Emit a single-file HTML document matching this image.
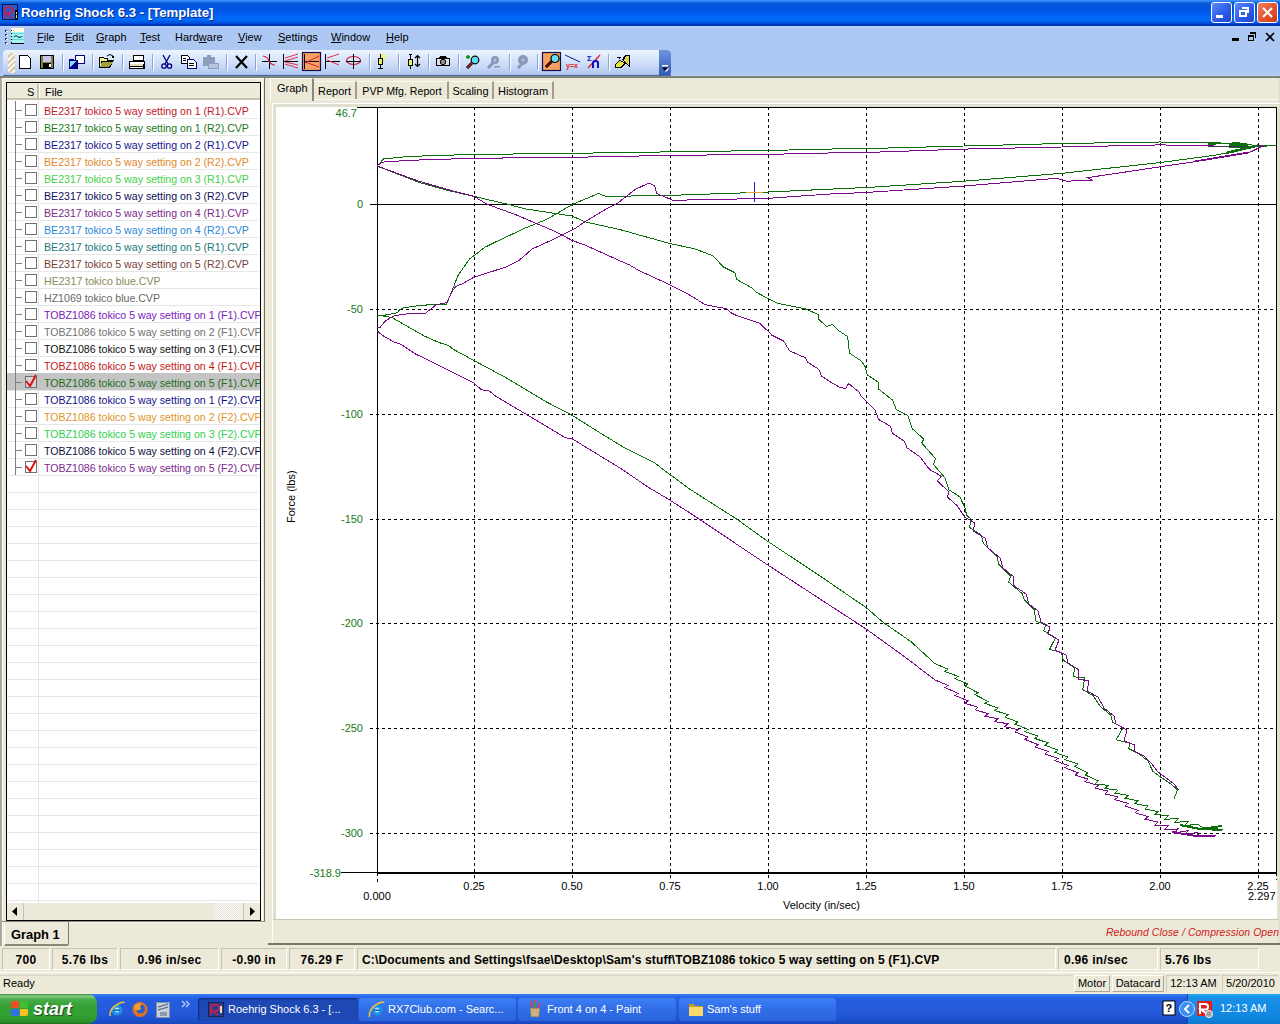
<!DOCTYPE html>
<html><head><meta charset="utf-8">
<style>
*{margin:0;padding:0;box-sizing:border-box}
html,body{width:1280px;height:1024px;overflow:hidden;background:#ece9d8;font-family:"Liberation Sans",sans-serif;font-size:11px;color:#000}
.a{position:absolute}
.t{position:absolute;white-space:nowrap;line-height:1}
.rt{position:absolute;left:44px;white-space:nowrap;line-height:17px;padding-top:2px;height:17px;font-size:10.6px;width:216px;overflow:hidden}
.menu span{position:absolute;top:31px;line-height:12px;font-size:11px;white-space:nowrap}
.sunk{position:absolute;border-top:1px solid #aca899;border-left:1px solid #aca899;border-bottom:1px solid #fff;border-right:1px solid #fff}
.sb{position:absolute;top:948px;height:22px;padding-top:1px;border-top:1px solid #c5c2b2;border-left:1px solid #c5c2b2;border-bottom:1px solid #fff;border-right:1px solid #fff;font-weight:bold;font-size:12px;line-height:20px;text-align:center;white-space:nowrap;overflow:hidden;letter-spacing:0.3px}
.tab{position:absolute;top:81px;height:18px;border-right:2px solid #a09f90;border-top:1px solid #fbf9f0;font-size:11px;line-height:18px;text-align:center;white-space:nowrap}
.lbl{position:absolute;color:#187818;font-size:11px;line-height:11px;text-align:right;white-space:nowrap}
.xl{position:absolute;font-size:11px;line-height:11px;white-space:nowrap;text-align:center}
.tbtn{position:absolute;top:998px;height:23px;border-radius:3px;color:#fff;font-size:11px;line-height:22px;white-space:nowrap;overflow:hidden}
.sep{position:absolute;top:55px;width:1px;height:16px;background:#8aa4d0;box-shadow:1px 0 0 #fff}
</style></head>
<body>
<!-- title bar -->
<div class="a" style="left:0;top:0;width:1280px;height:26px;background:linear-gradient(#3d95ff 0px,#2a7af0 1.5px,#0a5ad8 3px,#0054e0 7px,#0058ea 12px,#0068f8 17px,#006af8 20px,#0050dc 23px,#0032b0 25px,#0032a8 26px)"></div>
<svg class="a" style="left:2px;top:4px" width="16" height="16"><rect x="0" y="0" width="16" height="16" fill="#0a1450"/><rect x="1" y="1" width="14" height="14" fill="#3258c0"/><path d="M3.5 14V3.5H8Q11 3.5 11 6.5Q11 9 8 9H4.5L10 13.5" fill="none" stroke="#c02050" stroke-width="1.6"/><rect x="13" y="6" width="3" height="10" fill="#000"/><rect x="14" y="8" width="1" height="2" fill="#e8e0a0"/><rect x="14" y="11" width="1" height="3" fill="#e8e0a0"/></svg>
<div class="t" style="left:21px;top:6px;color:#fff;font-weight:bold;font-size:13.2px;text-shadow:1px 1px 0 #0a2a90">Roehrig Shock 6.3 - [Template]</div>
<div class="a" style="left:1211px;top:2px;width:21px;height:21px;border:1px solid #fff;border-radius:3px;background:linear-gradient(135deg,#5a8af8,#2a5ae8 60%,#1a46c8)"></div>
<div class="a" style="left:1216px;top:15px;width:7px;height:3px;background:#fff"></div>
<div class="a" style="left:1234px;top:2px;width:21px;height:21px;border:1px solid #fff;border-radius:3px;background:linear-gradient(135deg,#5a8af8,#2a5ae8 60%,#1a46c8)"></div>
<div class="a" style="left:1239px;top:10px;width:8px;height:7px;border:2px solid #fff;border-top-width:2px"></div>
<div class="a" style="left:1242px;top:7px;width:7px;height:6px;border-top:2px solid #fff;border-right:2px solid #fff"></div>
<div class="a" style="left:1257px;top:2px;width:21px;height:21px;border:1px solid #fff;border-radius:3px;background:linear-gradient(135deg,#f08060,#e0502a 60%,#c83a18)"></div>
<svg class="a" style="left:1261px;top:6px" width="13" height="13"><path d="M2 2L11 11M11 2L2 11" stroke="#fff" stroke-width="2"/></svg>

<!-- menu bar -->
<div class="a" style="left:0;top:26px;width:1280px;height:50px;background:linear-gradient(#bcd2fa 0,#aec8f4 3px,#adc7f3 45px,#b4ccf8 50px)"></div>
<svg class="a" style="left:0;top:26px" width="30" height="24" shape-rendering="crispEdges"><g fill="#203a68"><rect x="5" y="4" width="2" height="2"/><rect x="5" y="8" width="2" height="2"/><rect x="5" y="12" width="2" height="2"/><rect x="5" y="16" width="2" height="2"/></g><g fill="#fff"><rect x="6" y="5" width="2" height="1"/><rect x="6" y="9" width="2" height="1"/><rect x="6" y="13" width="2" height="1"/><rect x="6" y="17" width="2" height="1"/></g><rect x="11" y="2" width="13" height="4" fill="#fffce0"/><rect x="11" y="6" width="13" height="11" fill="#a8f4f0"/><g fill="#60d8d8"><rect x="11" y="7" width="13" height="1"/><rect x="11" y="10" width="13" height="1"/><rect x="11" y="13" width="13" height="1"/></g><path d="M14 11Q16 8 18 11Q20 13 22 10" fill="none" stroke="#204040" stroke-width="1" shape-rendering="auto"/><rect x="11" y="17" width="13" height="1" fill="#000"/><g fill="#000"><rect x="11" y="4" width="1" height="1"/><rect x="11" y="7" width="1" height="1"/><rect x="11" y="10" width="1" height="1"/><rect x="11" y="13" width="1" height="1"/><rect x="11" y="16" width="1" height="1"/></g></svg>
<div class="menu">
<span style="left:37px"><u>F</u>ile</span>
<span style="left:65px"><u>E</u>dit</span>
<span style="left:96px"><u>G</u>raph</span>
<span style="left:140px"><u>T</u>est</span>
<span style="left:175px">Hard<u>w</u>are</span>
<span style="left:238px"><u>V</u>iew</span>
<span style="left:278px"><u>S</u>ettings</span>
<span style="left:331px"><u>W</u>indow</span>
<span style="left:386px"><u>H</u>elp</span>
</div>
<div class="a" style="left:1232px;top:38px;width:7px;height:3px;background:#000"></div>
<div class="a" style="left:1248px;top:35px;width:6px;height:6px;border:1px solid #000;border-top-width:2px"></div>
<div class="a" style="left:1250px;top:32px;width:6px;height:6px;border-top:2px solid #000;border-right:1px solid #000"></div>
<svg class="a" style="left:1265px;top:32px" width="10" height="10"><path d="M1 1L9 9M9 1L1 9" stroke="#000" stroke-width="1.6"/></svg>

<!-- toolbar -->
<div class="a" style="left:3px;top:50px;width:668px;height:26px;border-radius:4px 4px 4px 4px;background:linear-gradient(#eef4fe 0px,#dfeafc 6px,#c9daf8 16px,#b0c7ef 24px,#8ea8d8 26px)"></div>
<div class="a" style="left:659px;top:50px;width:12px;height:26px;border-radius:0 4px 4px 0;background:linear-gradient(#6f94de,#2d58b8)"></div>
<svg class="a" style="left:660px;top:64px" width="11" height="10"><rect x="2" y="1" width="6" height="1.5" fill="#fff"/><path d="M2 3.5H8L5 7Z" fill="#000"/><path d="M5.5 7.5L8.5 4.5" stroke="#fff" stroke-width="1.2"/></svg>
<div class="a" style="left:8px;top:53px;width:7px;height:20px;background:repeating-linear-gradient(135deg,#f8f4e8 0 2px,#d8c8a8 2px 4px)"></div>
<svg class="a" style="left:0;top:0" width="680" height="78" shape-rendering="crispEdges">
<!-- separators -->
<g fill="#8ba6d2"><rect x="62" y="54" width="1" height="16"/><rect x="92" y="54" width="1" height="16"/><rect x="122" y="54" width="1" height="16"/><rect x="152" y="54" width="1" height="16"/><rect x="226" y="54" width="1" height="16"/><rect x="255" y="54" width="1" height="16"/><rect x="369" y="54" width="1" height="16"/><rect x="398" y="54" width="1" height="16"/><rect x="428" y="54" width="1" height="16"/><rect x="458" y="54" width="1" height="16"/><rect x="509" y="54" width="1" height="16"/><rect x="537" y="54" width="1" height="16"/><rect x="608" y="54" width="1" height="16"/></g>
<g fill="#fff"><rect x="63" y="55" width="1" height="16"/><rect x="93" y="55" width="1" height="16"/><rect x="123" y="55" width="1" height="16"/><rect x="153" y="55" width="1" height="16"/><rect x="227" y="55" width="1" height="16"/><rect x="256" y="55" width="1" height="16"/><rect x="370" y="55" width="1" height="16"/><rect x="399" y="55" width="1" height="16"/><rect x="429" y="55" width="1" height="16"/><rect x="459" y="55" width="1" height="16"/><rect x="510" y="55" width="1" height="16"/><rect x="538" y="55" width="1" height="16"/><rect x="609" y="55" width="1" height="16"/></g>
<!-- new -->
<path d="M19 55H27L30 58V68H19Z" fill="#fff" stroke="#000" stroke-width="1" transform="translate(0.5,0.5)"/>
<!-- save -->
<rect x="40" y="55" width="14" height="14" fill="#000"/>
<rect x="41" y="56" width="12" height="12" fill="#808040"/>
<rect x="43" y="56" width="8" height="6" fill="#c8c8e8"/>
<rect x="43" y="63" width="8" height="5" fill="#000"/>
<rect x="49" y="64" width="2" height="3" fill="#fff"/>
<!-- export -->
<rect x="75" y="55" width="10" height="9" fill="#000080"/>
<rect x="76" y="56" width="8" height="7" fill="#fff"/>
<path d="M69 59H73L74 60H78V69H69Z" fill="#000080"/>
<path d="M70 61H76L70 68Z" fill="#80e0f0"/>
<!-- open -->
<path d="M99 57H103L104 58H108V60H114L110 68H99Z" fill="#000"/>
<path d="M100 58H103L104 59H107V61H101V66H100Z" fill="#f8f090"/>
<path d="M102 62H113L109 67H100Z" fill="#a0a040"/>
<path d="M107 56Q110 53 113 56" fill="none" stroke="#000" stroke-width="1" shape-rendering="auto"/>
<rect x="112" y="56" width="2" height="2" fill="#000"/>
<!-- print -->
<path d="M133 55H143V60H133Z" fill="#fff" stroke="#000" transform="translate(0.5,0.5)"/>
<rect x="129" y="61" width="16" height="8" fill="#000"/>
<rect x="130" y="62" width="14" height="2" fill="#fff"/>
<rect x="130" y="64" width="13" height="2" fill="#e0e0b0"/>
<rect x="130" y="67" width="13" height="1" fill="#fff"/>
<!-- cut -->
<g fill="none" stroke="#000080" stroke-width="1.3" shape-rendering="auto"><path d="M163 55L168 64M170 55L165 64"/><circle cx="164" cy="66" r="2.2"/><circle cx="169.5" cy="66" r="2.2"/></g>
<!-- copy -->
<path d="M181 55H187L189 57V63H181Z" fill="#fff" stroke="#000" transform="translate(0.5,0.5)"/>
<path d="M187 59H193L196 62V68H187Z" fill="#fff" stroke="#000080" stroke-width="1.2" transform="translate(0.5,0.5)"/>
<g fill="#000"><rect x="183" y="58" width="3" height="1"/><rect x="183" y="60" width="3" height="1"/><rect x="189" y="63" width="5" height="1"/><rect x="189" y="65" width="5" height="1"/></g>
<!-- paste disabled -->
<path d="M203 57H207V55H211V57H215V63H219V69H208V66H203Z" fill="#8e9cbc"/>
<rect x="209" y="64" width="9" height="4" fill="#b8c4dc"/>
<!-- delete X -->
<path d="M236 56L247 68M247 56L236 68" stroke="#000" stroke-width="2.2" shape-rendering="auto"/>
<!-- graph icons -->
<g shape-rendering="auto">
<path d="M262 61.5H277M269.5 54V69" stroke="#000" stroke-width="1"/>
<path d="M263 56Q268 57 269 61Q271 65 275 65" stroke="#d02040" stroke-width="1.2" fill="none"/>
<path d="M283.5 54V69M284 61.5H298" stroke="#000" stroke-width="1"/>
<path d="M285 58L298 54M285 61L298 57M285 62L298 65M285 64L298 68" stroke="#e03050" stroke-width="1" fill="none"/>
<rect x="302.5" y="52.5" width="18" height="18" fill="#f8a060" stroke="#101050" stroke-width="1.2"/>
<path d="M304.5 54V69M305 61.5H319" stroke="#000" stroke-width="1"/>
<path d="M305 63L319 56M305 62L319 67" stroke="#d02040" stroke-width="1" fill="none"/>
<path d="M325.5 54V69M326 61.5H340" stroke="#000" stroke-width="1"/>
<path d="M327 58L339 54M327 60L339 65" stroke="#e03050" stroke-width="1" fill="none"/>
<ellipse cx="353.5" cy="60.5" rx="7" ry="4" fill="none" stroke="#d02040" stroke-width="1.2"/>
<path d="M353.5 54V69M346 61.5H361" stroke="#000" stroke-width="1"/>
</g>
<!-- shock -->
<circle cx="383" cy="57" r="3" fill="#f8f840" opacity="0.6"/>
<rect x="380" y="54" width="1" height="15" fill="#000"/>
<rect x="378" y="58" width="5" height="7" fill="#000"/><rect x="379" y="59" width="3" height="5" fill="#f0f060"/>
<rect x="378" y="68" width="5" height="1" fill="#000"/>
<!-- shock + arrow -->
<rect x="410" y="54" width="1" height="15" fill="#000"/><rect x="409" y="54" width="3" height="1" fill="#000"/>
<rect x="408" y="59" width="5" height="7" fill="#000"/><rect x="409" y="60" width="3" height="5" fill="#f0f060"/>
<path d="M417.5 56V66M415 58L417.5 55.5L420 58M415 64L417.5 66.5L420 64" stroke="#000" stroke-width="1.2" fill="none" shape-rendering="auto"/>
<!-- camera -->
<path d="M436 58H439L440 56H446L447 58H450V66H436Z" fill="#000"/>
<rect x="437" y="59" width="12" height="6" fill="#e0e0e0"/>
<circle cx="443" cy="62" r="2.7" fill="#909090" stroke="#000" shape-rendering="auto"/>
<!-- zoom+ -->
<g shape-rendering="auto">
<path d="M468 55V59M466 57H470" stroke="#10a010" stroke-width="1.8"/>
<path d="M467 68L472 63" stroke="#000" stroke-width="3"/><path d="M467 68L472 63" stroke="#a02020" stroke-width="1.6"/>
<circle cx="475" cy="60" r="3.8" fill="#60e0f0" stroke="#000" stroke-width="1.2"/>
<path d="M488 68L493 63" stroke="#8898b8" stroke-width="3"/>
<circle cx="495" cy="60" r="4" fill="#8898b8"/><circle cx="495" cy="60" r="1.5" fill="#b8c4dc"/>
<rect x="494" y="66" width="6" height="1.5" fill="#8898b8"/>
<path d="M518 68L522 64" stroke="#8898b8" stroke-width="3"/>
<circle cx="523" cy="60" r="5" fill="#8898b8"/><circle cx="523" cy="60" r="1.5" fill="#b8c4dc"/>
<rect x="542.5" y="52.5" width="18" height="18" fill="#f8a060" stroke="#101050" stroke-width="1.2"/>
<path d="M546 67L552 61" stroke="#000" stroke-width="3"/><path d="M546 67L552 61" stroke="#800000" stroke-width="1.6"/>
<circle cx="555" cy="58.5" r="4" fill="#60e0f0" stroke="#000" stroke-width="1.2"/>
<path d="M565 55L580 62" stroke="#1a1a90" stroke-width="1"/>
<text x="566" y="68" font-family="Liberation Sans" font-size="7" font-weight="bold" fill="#e02020">y=x</text>
<text x="587" y="61" font-family="Liberation Sans" font-size="8" font-weight="bold" fill="#1010c0">Σ</text>
<path d="M588 68L600 55" stroke="#e02020" stroke-width="1.3"/>
<path d="M593 68V63Q593 61 595.5 61Q598 61 598 63V68" stroke="#1010c0" stroke-width="2" fill="none"/>
</g>
<!-- last icon -->
<path d="M615 64L620 60L626 63L622 68H615Z" fill="#000"/><path d="M616 64L620 61L624 63L621 67H616Z" fill="#e8e840"/>
<path d="M625 55H630V68L622 60Z" fill="#000"/><path d="M626 56H629V66L624 60Z" fill="#d8d860"/>
<path d="M617 57H621L619 59" stroke="#000" fill="none"/>
</svg>


<div class="a" style="left:3px;top:75px;width:668px;height:1px;background:#4a66a0"></div>
<div class="a" style="left:0;top:76px;width:1280px;height:2px;background:linear-gradient(#8a9088,#707868)"></div>

<!-- left pane frame -->
<div class="a" style="left:0;top:78px;width:2px;height:869px;background:#aca899"></div>
<div class="a" style="left:2px;top:78px;width:262px;height:1px;background:#fff"></div>
<div class="a" style="left:2px;top:78px;width:1px;height:868px;background:#fff"></div>
<div class="a" style="left:264px;top:78px;width:1px;height:844px;background:#6e6c60"></div>
<div class="a" style="left:2px;top:921px;width:263px;height:1px;background:#8a887c"></div>
<div class="a" style="left:261px;top:79px;width:2px;height:842px;background:#fbfaf2"></div>
<div class="a" style="left:269px;top:78px;width:1px;height:866px;background:#fbfaf2"></div>

<!-- list control -->
<div class="a" style="left:6px;top:82px;width:255px;height:839px;background:#fff;border:1px solid #000"></div>
<div class="a" style="left:7px;top:83px;width:253px;height:17px;background:#ebeadb;border-bottom:2px solid #c6c3b3"></div>
<div class="a" style="left:37px;top:84px;width:2px;height:14px;background:#c6c3b3;box-shadow:1px 0 0 #fff"></div>
<div class="t" style="left:27px;top:87px">S</div>
<div class="t" style="left:45px;top:87px">File</div>
<div style="position:absolute;left:7px;top:118px;width:252px;height:1px;background:#e6e6e6"></div>
<div style="position:absolute;left:7px;top:135px;width:252px;height:1px;background:#e6e6e6"></div>
<div style="position:absolute;left:7px;top:152px;width:252px;height:1px;background:#e6e6e6"></div>
<div style="position:absolute;left:7px;top:169px;width:252px;height:1px;background:#e6e6e6"></div>
<div style="position:absolute;left:7px;top:186px;width:252px;height:1px;background:#e6e6e6"></div>
<div style="position:absolute;left:7px;top:203px;width:252px;height:1px;background:#e6e6e6"></div>
<div style="position:absolute;left:7px;top:220px;width:252px;height:1px;background:#e6e6e6"></div>
<div style="position:absolute;left:7px;top:237px;width:252px;height:1px;background:#e6e6e6"></div>
<div style="position:absolute;left:7px;top:254px;width:252px;height:1px;background:#e6e6e6"></div>
<div style="position:absolute;left:7px;top:271px;width:252px;height:1px;background:#e6e6e6"></div>
<div style="position:absolute;left:7px;top:288px;width:252px;height:1px;background:#e6e6e6"></div>
<div style="position:absolute;left:7px;top:305px;width:252px;height:1px;background:#e6e6e6"></div>
<div style="position:absolute;left:7px;top:322px;width:252px;height:1px;background:#e6e6e6"></div>
<div style="position:absolute;left:7px;top:339px;width:252px;height:1px;background:#e6e6e6"></div>
<div style="position:absolute;left:7px;top:356px;width:252px;height:1px;background:#e6e6e6"></div>
<div style="position:absolute;left:7px;top:373px;width:252px;height:1px;background:#e6e6e6"></div>
<div style="position:absolute;left:7px;top:390px;width:252px;height:1px;background:#e6e6e6"></div>
<div style="position:absolute;left:7px;top:407px;width:252px;height:1px;background:#e6e6e6"></div>
<div style="position:absolute;left:7px;top:424px;width:252px;height:1px;background:#e6e6e6"></div>
<div style="position:absolute;left:7px;top:441px;width:252px;height:1px;background:#e6e6e6"></div>
<div style="position:absolute;left:7px;top:458px;width:252px;height:1px;background:#e6e6e6"></div>
<div style="position:absolute;left:7px;top:475px;width:252px;height:1px;background:#e6e6e6"></div>
<div style="position:absolute;left:7px;top:492px;width:252px;height:1px;background:#e6e6e6"></div>
<div style="position:absolute;left:7px;top:509px;width:252px;height:1px;background:#e6e6e6"></div>
<div style="position:absolute;left:7px;top:526px;width:252px;height:1px;background:#e6e6e6"></div>
<div style="position:absolute;left:7px;top:543px;width:252px;height:1px;background:#e6e6e6"></div>
<div style="position:absolute;left:7px;top:560px;width:252px;height:1px;background:#e6e6e6"></div>
<div style="position:absolute;left:7px;top:577px;width:252px;height:1px;background:#e6e6e6"></div>
<div style="position:absolute;left:7px;top:594px;width:252px;height:1px;background:#e6e6e6"></div>
<div style="position:absolute;left:7px;top:611px;width:252px;height:1px;background:#e6e6e6"></div>
<div style="position:absolute;left:7px;top:628px;width:252px;height:1px;background:#e6e6e6"></div>
<div style="position:absolute;left:7px;top:645px;width:252px;height:1px;background:#e6e6e6"></div>
<div style="position:absolute;left:7px;top:662px;width:252px;height:1px;background:#e6e6e6"></div>
<div style="position:absolute;left:7px;top:679px;width:252px;height:1px;background:#e6e6e6"></div>
<div style="position:absolute;left:7px;top:696px;width:252px;height:1px;background:#e6e6e6"></div>
<div style="position:absolute;left:7px;top:713px;width:252px;height:1px;background:#e6e6e6"></div>
<div style="position:absolute;left:7px;top:730px;width:252px;height:1px;background:#e6e6e6"></div>
<div style="position:absolute;left:7px;top:747px;width:252px;height:1px;background:#e6e6e6"></div>
<div style="position:absolute;left:7px;top:764px;width:252px;height:1px;background:#e6e6e6"></div>
<div style="position:absolute;left:7px;top:781px;width:252px;height:1px;background:#e6e6e6"></div>
<div style="position:absolute;left:7px;top:798px;width:252px;height:1px;background:#e6e6e6"></div>
<div style="position:absolute;left:7px;top:815px;width:252px;height:1px;background:#e6e6e6"></div>
<div style="position:absolute;left:7px;top:832px;width:252px;height:1px;background:#e6e6e6"></div>
<div style="position:absolute;left:7px;top:849px;width:252px;height:1px;background:#e6e6e6"></div>
<div style="position:absolute;left:7px;top:866px;width:252px;height:1px;background:#e6e6e6"></div>
<div style="position:absolute;left:7px;top:883px;width:252px;height:1px;background:#e6e6e6"></div>
<div style="position:absolute;left:7px;top:900px;width:252px;height:1px;background:#e6e6e6"></div>
<div style="position:absolute;left:38px;top:100px;width:1px;height:803px;background:#e6e6e6"></div>
<div style="position:absolute;left:15px;top:101px;width:1px;height:17px;background:#808080"></div>
<div style="position:absolute;left:15px;top:110px;width:7px;height:1px;background:#808080"></div>
<div style="position:absolute;left:25px;top:104px;width:12px;height:12px;border:1px solid #707070;background:#fff"></div>
<div class="rt" style="top:101px;color:#c0202a">BE2317 tokico 5 way setting on 1 (R1).CVP</div>
<div style="position:absolute;left:15px;top:118px;width:1px;height:17px;background:#808080"></div>
<div style="position:absolute;left:15px;top:127px;width:7px;height:1px;background:#808080"></div>
<div style="position:absolute;left:25px;top:121px;width:12px;height:12px;border:1px solid #707070;background:#fff"></div>
<div class="rt" style="top:118px;color:#1a7a1a">BE2317 tokico 5 way setting on 1 (R2).CVP</div>
<div style="position:absolute;left:15px;top:135px;width:1px;height:17px;background:#808080"></div>
<div style="position:absolute;left:15px;top:144px;width:7px;height:1px;background:#808080"></div>
<div style="position:absolute;left:25px;top:138px;width:12px;height:12px;border:1px solid #707070;background:#fff"></div>
<div class="rt" style="top:135px;color:#14148e">BE2317 tokico 5 way setting on 2 (R1).CVP</div>
<div style="position:absolute;left:15px;top:152px;width:1px;height:17px;background:#808080"></div>
<div style="position:absolute;left:15px;top:161px;width:7px;height:1px;background:#808080"></div>
<div style="position:absolute;left:25px;top:155px;width:12px;height:12px;border:1px solid #707070;background:#fff"></div>
<div class="rt" style="top:152px;color:#e0882a">BE2317 tokico 5 way setting on 2 (R2).CVP</div>
<div style="position:absolute;left:15px;top:169px;width:1px;height:17px;background:#808080"></div>
<div style="position:absolute;left:15px;top:178px;width:7px;height:1px;background:#808080"></div>
<div style="position:absolute;left:25px;top:172px;width:12px;height:12px;border:1px solid #707070;background:#fff"></div>
<div class="rt" style="top:169px;color:#44d044">BE2317 tokico 5 way setting on 3 (R1).CVP</div>
<div style="position:absolute;left:15px;top:186px;width:1px;height:17px;background:#808080"></div>
<div style="position:absolute;left:15px;top:195px;width:7px;height:1px;background:#808080"></div>
<div style="position:absolute;left:25px;top:189px;width:12px;height:12px;border:1px solid #707070;background:#fff"></div>
<div class="rt" style="top:186px;color:#0e0e5a">BE2317 tokico 5 way setting on 3 (R2).CVP</div>
<div style="position:absolute;left:15px;top:203px;width:1px;height:17px;background:#808080"></div>
<div style="position:absolute;left:15px;top:212px;width:7px;height:1px;background:#808080"></div>
<div style="position:absolute;left:25px;top:206px;width:12px;height:12px;border:1px solid #707070;background:#fff"></div>
<div class="rt" style="top:203px;color:#7a2a8a">BE2317 tokico 5 way setting on 4 (R1).CVP</div>
<div style="position:absolute;left:15px;top:220px;width:1px;height:17px;background:#808080"></div>
<div style="position:absolute;left:15px;top:229px;width:7px;height:1px;background:#808080"></div>
<div style="position:absolute;left:25px;top:223px;width:12px;height:12px;border:1px solid #707070;background:#fff"></div>
<div class="rt" style="top:220px;color:#2a88d8">BE2317 tokico 5 way setting on 4 (R2).CVP</div>
<div style="position:absolute;left:15px;top:237px;width:1px;height:17px;background:#808080"></div>
<div style="position:absolute;left:15px;top:246px;width:7px;height:1px;background:#808080"></div>
<div style="position:absolute;left:25px;top:240px;width:12px;height:12px;border:1px solid #707070;background:#fff"></div>
<div class="rt" style="top:237px;color:#1a7878">BE2317 tokico 5 way setting on 5 (R1).CVP</div>
<div style="position:absolute;left:15px;top:254px;width:1px;height:17px;background:#808080"></div>
<div style="position:absolute;left:15px;top:263px;width:7px;height:1px;background:#808080"></div>
<div style="position:absolute;left:25px;top:257px;width:12px;height:12px;border:1px solid #707070;background:#fff"></div>
<div class="rt" style="top:254px;color:#7a4038">BE2317 tokico 5 way setting on 5 (R2).CVP</div>
<div style="position:absolute;left:15px;top:271px;width:1px;height:17px;background:#808080"></div>
<div style="position:absolute;left:15px;top:280px;width:7px;height:1px;background:#808080"></div>
<div style="position:absolute;left:25px;top:274px;width:12px;height:12px;border:1px solid #707070;background:#fff"></div>
<div class="rt" style="top:271px;color:#8a8a5a">HE2317 tokico blue.CVP</div>
<div style="position:absolute;left:15px;top:288px;width:1px;height:17px;background:#808080"></div>
<div style="position:absolute;left:15px;top:297px;width:7px;height:1px;background:#808080"></div>
<div style="position:absolute;left:25px;top:291px;width:12px;height:12px;border:1px solid #707070;background:#fff"></div>
<div class="rt" style="top:288px;color:#686868">HZ1069 tokico blue.CVP</div>
<div style="position:absolute;left:15px;top:305px;width:1px;height:17px;background:#808080"></div>
<div style="position:absolute;left:15px;top:314px;width:7px;height:1px;background:#808080"></div>
<div style="position:absolute;left:25px;top:308px;width:12px;height:12px;border:1px solid #707070;background:#fff"></div>
<div class="rt" style="top:305px;color:#7a20b8">TOBZ1086 tokico 5 way setting on 1 (F1).CVP</div>
<div style="position:absolute;left:15px;top:322px;width:1px;height:17px;background:#808080"></div>
<div style="position:absolute;left:15px;top:331px;width:7px;height:1px;background:#808080"></div>
<div style="position:absolute;left:25px;top:325px;width:12px;height:12px;border:1px solid #707070;background:#fff"></div>
<div class="rt" style="top:322px;color:#707070">TOBZ1086 tokico 5 way setting on 2 (F1).CVP</div>
<div style="position:absolute;left:15px;top:339px;width:1px;height:17px;background:#808080"></div>
<div style="position:absolute;left:15px;top:348px;width:7px;height:1px;background:#808080"></div>
<div style="position:absolute;left:25px;top:342px;width:12px;height:12px;border:1px solid #707070;background:#fff"></div>
<div class="rt" style="top:339px;color:#101010">TOBZ1086 tokico 5 way setting on 3 (F1).CVP</div>
<div style="position:absolute;left:15px;top:356px;width:1px;height:17px;background:#808080"></div>
<div style="position:absolute;left:15px;top:365px;width:7px;height:1px;background:#808080"></div>
<div style="position:absolute;left:25px;top:359px;width:12px;height:12px;border:1px solid #707070;background:#fff"></div>
<div class="rt" style="top:356px;color:#c01818">TOBZ1086 tokico 5 way setting on 4 (F1).CVP</div>
<div style="position:absolute;left:7px;top:373px;width:253px;height:17px;background:#c4c4c4"></div>
<div style="position:absolute;left:15px;top:373px;width:1px;height:17px;background:#808080"></div>
<div style="position:absolute;left:15px;top:382px;width:7px;height:1px;background:#808080"></div>
<div style="position:absolute;left:25px;top:376px;width:12px;height:12px;border:1px solid #707070;background:#d4d4d4"></div>
<svg style="position:absolute;left:24px;top:374px" width="14" height="14"><polyline points="2,7 6,12 12,1" fill="none" stroke="#e01010" stroke-width="2"/></svg>
<div class="rt" style="top:373px;color:#1e6e1e">TOBZ1086 tokico 5 way setting on 5 (F1).CVP</div>
<div style="position:absolute;left:15px;top:390px;width:1px;height:17px;background:#808080"></div>
<div style="position:absolute;left:15px;top:399px;width:7px;height:1px;background:#808080"></div>
<div style="position:absolute;left:25px;top:393px;width:12px;height:12px;border:1px solid #707070;background:#fff"></div>
<div class="rt" style="top:390px;color:#10108a">TOBZ1086 tokico 5 way setting on 1 (F2).CVP</div>
<div style="position:absolute;left:15px;top:407px;width:1px;height:17px;background:#808080"></div>
<div style="position:absolute;left:15px;top:416px;width:7px;height:1px;background:#808080"></div>
<div style="position:absolute;left:25px;top:410px;width:12px;height:12px;border:1px solid #707070;background:#fff"></div>
<div class="rt" style="top:407px;color:#e0942a">TOBZ1086 tokico 5 way setting on 2 (F2).CVP</div>
<div style="position:absolute;left:15px;top:424px;width:1px;height:17px;background:#808080"></div>
<div style="position:absolute;left:15px;top:433px;width:7px;height:1px;background:#808080"></div>
<div style="position:absolute;left:25px;top:427px;width:12px;height:12px;border:1px solid #707070;background:#fff"></div>
<div class="rt" style="top:424px;color:#30d050">TOBZ1086 tokico 5 way setting on 3 (F2).CVP</div>
<div style="position:absolute;left:15px;top:441px;width:1px;height:17px;background:#808080"></div>
<div style="position:absolute;left:15px;top:450px;width:7px;height:1px;background:#808080"></div>
<div style="position:absolute;left:25px;top:444px;width:12px;height:12px;border:1px solid #707070;background:#fff"></div>
<div class="rt" style="top:441px;color:#0e0e3e">TOBZ1086 tokico 5 way setting on 4 (F2).CVP</div>
<div style="position:absolute;left:15px;top:458px;width:1px;height:17px;background:#808080"></div>
<div style="position:absolute;left:15px;top:467px;width:7px;height:1px;background:#808080"></div>
<div style="position:absolute;left:25px;top:461px;width:12px;height:12px;border:1px solid #707070;background:#fff"></div>
<svg style="position:absolute;left:24px;top:459px" width="14" height="14"><polyline points="2,7 6,12 12,1" fill="none" stroke="#e01010" stroke-width="2"/></svg>
<div class="rt" style="top:458px;color:#7a2a8e">TOBZ1086 tokico 5 way setting on 5 (F2).CVP</div>
<!-- scrollbar -->
<div class="a" style="left:7px;top:903px;width:253px;height:17px;background:#ebeadb"></div>
<div class="a" style="left:7px;top:903px;width:17px;height:17px;background:#ebeadb;border-right:1px solid #c6c3b3"></div>
<svg class="a" style="left:11px;top:907px" width="8" height="9"><path d="M6 0L1 4.5L6 9Z" fill="#000"/></svg>
<div class="a" style="left:215px;top:903px;width:28px;height:17px;background:repeating-conic-gradient(#fff 0 25%,#e0ddd0 0 50%) 0 0/2px 2px"></div>
<div class="a" style="left:243px;top:903px;width:17px;height:17px;background:#ebeadb;border-left:1px solid #c6c3b3"></div>
<svg class="a" style="left:249px;top:907px" width="8" height="9"><path d="M1 0L6 4.5L1 9Z" fill="#000"/></svg>

<!-- Graph 1 tab -->
<div class="a" style="left:4px;top:922px;width:65px;height:24px;background:#ece9d8;border-left:1px solid #fff;border-right:1px solid #7a786c;border-bottom:2px solid #8a887c;border-radius:0 0 2px 0"></div>
<div class="t" style="left:11px;top:929px;font-weight:bold;font-size:12.9px">Graph 1</div>
<div class="a" style="left:69px;top:922px;width:196px;height:1px;background:#fbfaf2"></div>

<!-- right: tabs -->
<div class="a" style="left:268px;top:78px;width:1012px;height:866px;background:#ece9d8"></div>
<div class="a" style="left:270px;top:78px;width:44px;height:23px;background:#ece9d8;border-top:1px solid #fff;border-left:1px solid #fff;border-right:2px solid #8a887c"></div>
<div class="t" style="left:277px;top:83px">Graph</div>
<div class="tab" style="left:314px;width:43px">Report</div>
<div class="tab" style="left:357px;width:92px;font-size:10.6px">PVP Mfg. Report</div>
<div class="tab" style="left:449px;width:45px">Scaling</div>
<div class="tab" style="left:494px;width:60px">Histogram</div>
<!-- tab page -->
<div class="a" style="left:314px;top:99px;width:964px;height:1px;background:#fbf9f0"></div>
<div class="a" style="left:1278px;top:78px;width:2px;height:866px;background:#e2dfd0"></div>
<div class="a" style="left:272px;top:103px;width:1008px;height:1px;background:#fff"></div>
<div class="a" style="left:272px;top:103px;width:1px;height:840px;background:#fff"></div>
<div class="a" style="left:273px;top:104px;width:1007px;height:3px;background:#e0dece"></div>
<div class="a" style="left:273px;top:104px;width:3px;height:815px;background:#e0dece"></div>
<div class="a" style="left:276px;top:107px;width:1002px;height:812px;background:#fff"></div>
<div class="a" style="left:273px;top:919px;width:1006px;height:1px;background:#c8c5b5"></div>
<div class="a" style="left:1277px;top:104px;width:1px;height:815px;background:#e8e6d8"></div>

<!-- chart -->
<svg style="position:absolute;left:0;top:0" width="1280" height="1024" shape-rendering="crispEdges">
<line x1="474.5" y1="107" x2="474.5" y2="878" stroke="#000" stroke-width="1" stroke-dasharray="3 3"/>
<line x1="572.5" y1="107" x2="572.5" y2="878" stroke="#000" stroke-width="1" stroke-dasharray="3 3"/>
<line x1="670.5" y1="107" x2="670.5" y2="878" stroke="#000" stroke-width="1" stroke-dasharray="3 3"/>
<line x1="768.5" y1="107" x2="768.5" y2="878" stroke="#000" stroke-width="1" stroke-dasharray="3 3"/>
<line x1="866.5" y1="107" x2="866.5" y2="878" stroke="#000" stroke-width="1" stroke-dasharray="3 3"/>
<line x1="964.5" y1="107" x2="964.5" y2="878" stroke="#000" stroke-width="1" stroke-dasharray="3 3"/>
<line x1="1062.5" y1="107" x2="1062.5" y2="878" stroke="#000" stroke-width="1" stroke-dasharray="3 3"/>
<line x1="1160.5" y1="107" x2="1160.5" y2="878" stroke="#000" stroke-width="1" stroke-dasharray="3 3"/>
<line x1="1258.5" y1="107" x2="1258.5" y2="878" stroke="#000" stroke-width="1" stroke-dasharray="3 3"/>
<line x1="377.5" y1="873" x2="377.5" y2="884" stroke="#000" stroke-width="1" stroke-dasharray="3 3"/>
<line x1="1276.5" y1="873" x2="1276.5" y2="880" stroke="#000" stroke-width="1" stroke-dasharray="3 3"/>
<line x1="370" y1="309.5" x2="1276" y2="309.5" stroke="#000" stroke-width="1" stroke-dasharray="3 3"/>
<line x1="370" y1="414.5" x2="1276" y2="414.5" stroke="#000" stroke-width="1" stroke-dasharray="3 3"/>
<line x1="370" y1="519.5" x2="1276" y2="519.5" stroke="#000" stroke-width="1" stroke-dasharray="3 3"/>
<line x1="370" y1="623.5" x2="1276" y2="623.5" stroke="#000" stroke-width="1" stroke-dasharray="3 3"/>
<line x1="370" y1="728.5" x2="1276" y2="728.5" stroke="#000" stroke-width="1" stroke-dasharray="3 3"/>
<line x1="370" y1="833.5" x2="1276" y2="833.5" stroke="#000" stroke-width="1" stroke-dasharray="3 3"/>
<line x1="370" y1="204.5" x2="1276" y2="204.5" stroke="#000" stroke-width="1"/>
<line x1="357" y1="107.5" x2="1277" y2="107.5" stroke="#000" stroke-width="1"/>
<line x1="377.5" y1="107" x2="377.5" y2="874" stroke="#000" stroke-width="1"/>
<line x1="1276.5" y1="107" x2="1276.5" y2="874" stroke="#000" stroke-width="1"/>
<line x1="341" y1="872.5" x2="377" y2="872.5" stroke="#000" stroke-width="1"/>
<rect x="377" y="872" width="900" height="2" fill="#000"/>
</svg>
<svg style="position:absolute;left:0;top:0" width="1280" height="1024" shape-rendering="crispEdges">
<polyline points="377,166 383.7,158.9 409,156.4 474,154.4 572,153.4 620,152.5 669,151.9 767,150.5 850,148.6 866,148.6 964,146 1062,143.5 1160,142 1232,143.2 1246,144.9 1276,145.4" fill="none" stroke="#0c6f0c" stroke-width="1" stroke-linejoin="miter"/>
<polyline points="1276,145.4 1249,147.2 1232,151.8 1215,155.2 1160,162.6 1062,173.3 964,181.2 866,187.6 850,188.2 767,192.1 669,195.4 606,196.4 598.5,193.5 573,204.2 545.8,219.8 526,227.7 497,241.3 485,247.2 469.6,258.9 458,275.5 452,290.9 446.6,304 432.5,304.6 420.8,305.4 403.6,307.7 399.7,309.7 397.3,312.8 385.6,315 377,315" fill="none" stroke="#0c6f0c" stroke-width="1" stroke-linejoin="miter"/>
<polyline points="377,166 418.8,182.3 448,190.5 474,196.4 495,201.3 506.7,204 526,209 572,216 584.8,221.8 620,229.6 669,243.3 695.7,249.1 713.3,256 723,266.7 734.8,272.6 736.7,279.4 752.3,288.2 756,292.1 767,298 777.7,303.4 805,308.8 818.75,314.6 818.75,319.5 826.6,326.4 832.4,324.4 838.3,330.3 847.6,336.6 849.5,353.2 861.25,361 865.2,366.9 867.1,374.7 878.8,382.5 878.8,389.3 892.5,400 896.4,409.8 908,415.7 912,428.4 923.75,439.1 921.8,443 935.5,458.7 933.5,464.5 945.2,478.2 949,489.9 959.9,496.8 964.8,507.5 966.7,515.3 971.5,519.5 969.5,527.3 981.25,535.2 983.2,543 996.9,556.6 998.8,564.5 1010.5,576.2 1008.6,582 1022.3,593.75 1024.2,599.6 1034,609.4 1036,621.1 1045.7,625 1043.75,630.9 1055.5,637.7 1049.6,649.4 1061.3,652.3 1063.3,660.2 1075,668 1073,676.8 1084.8,677.7 1082.8,689.5 1093.3,695.8 1100.3,706.4 1110.8,715.1 1112.6,722.2 1123.1,727.5 1116.1,739.8 1130.2,743.3 1128.4,748.5 1139,753.8 1147.75,760.8 1153,771.4 1160,776.7 1170.6,783.7 1177.6,789.8 1174,798.6" fill="none" stroke="#0c6f0c" stroke-width="1" stroke-linejoin="miter"/>
<polyline points="377.0,315.0 391.9,317.5 424.7,336.2 438.8,342.5 448.0,345.2 453.6,349.5 474.0,360.5 506.7,378.1 545.8,401.6 572.0,415.2 600.0,432.8 625.4,448.4 654.7,463.0 669.0,473.8 690.0,489.3 737.2,519.4 767.0,540.9 818.9,575.2 866.0,607.5 883.3,622.5 911.2,641.8 935.0,663.7 948.0,669.1 945.0,671.5 958.0,676.3 955.0,678.7 968.0,684.0 965.0,685.9 978.0,692.8 975.0,694.6 988.0,701.5 985.0,703.4 998.0,708.0 995.0,710.6 1008.0,714.6 1005.0,717.1 1018.0,722.0 1015.0,724.2 1028.0,729.3 1025.0,731.7 1038.0,736.0 1035.0,738.5 1048.0,742.8 1045.0,745.2 1058.0,750.2 1055.0,752.4 1068.0,757.2 1065.0,759.6 1078.0,764.1 1075.0,766.4 1088.0,773.1 1085.0,774.9 1098.0,780.8 1095.0,783.9 1108.0,785.4 1105.0,788.5 1118.0,790.1 1115.0,793.2 1128.0,795.4 1125.0,798.3 1138.0,800.7 1135.0,803.6 1148.0,806.1 1145.0,808.9 1158.0,811.6 1155.0,814.5 1168.0,815.6 1165.0,819.2 1178.0,818.7 1175.0,822.2 1188.0,821.7 1185.0,825.3 1198.0,824.6 1205.8,829.4 1221.6,825.9 1205.0,828.0 1223.3,829.4" fill="none" stroke="#0c6f0c" stroke-width="1" stroke-linejoin="miter"/>
<polyline points="377,166 381.7,162.2 409,160.3 474,158.3 572,157.3 620,156.4 669,155.4 767,154.4 850,152.5 866,152.5 964,149.1 1062,147 1160,144.9 1209,145.8 1240,147 1263,145.8" fill="none" stroke="#7a0a8a" stroke-width="1" stroke-linejoin="miter"/>
<polyline points="1263,145.8 1249,152.7 1232,155.2 1197.5,161.3 1160,166.8 1111.6,174.1 1087.5,177.6 1092.7,180.2 1066.3,181.2 1056.6,178.4 1050,178.8 964,186 866,192.5 830,194 767,198.4 672.3,200.3 668.4,198.4 656.6,193.5 654.7,185.7 648.8,183.1 635,189.6 617.6,203.2 604.4,210 584.8,221.8 575,228.6 557.5,237.4 532,249.1 518.4,260.9 506.7,266.7 473.5,277.5 462,284 456,286.25 452.8,290.2 446.6,302.7 436.4,304.6 425.5,313.2 409,313.6 395,315.5 385.6,320.6 380.2,327.3 377,327.7" fill="none" stroke="#7a0a8a" stroke-width="1" stroke-linejoin="miter"/>
<polyline points="377,166 418.8,181.2 448,189.6 474,196.4 487,204.2 516.5,215 530,220.8 555.5,231.6 572,240.4 584.8,245 600.5,252 620,260.9 629.3,264.8 639,270.6 669,284.3 687.9,294 705.5,304.8 727,308.8 730.9,312.7 736.7,315.6 760,323.4 768,331.25 771.9,335.2 783.6,341 789.5,350.8 805,357.6 808,362.5 818.75,369.3 821.7,376.2 830.5,382 839.8,387.4 845.6,388.4 848.6,383.5 859.3,392.3 861.25,396.2 874.9,409.8 878.8,419.6 890.5,426.4 892.5,433.3 904.2,441.1 907.1,447.9 919.8,456.7 929.6,469.4 941.3,476.25 937.4,481.1 949.1,491.9 947.2,496.8 957,505.5 964.8,517.3 975,523 973,531 985,538 988,548 1000,558 1003,568 1014,577 1013,585 1026,594 1029,604 1038,611 1041,622 1050,627 1048,634 1059,640 1055,650 1066,655 1068,663 1079,670 1078,679 1089,681 1087,691 1098,697 1104,708 1114,716 1116,724 1127,730 1124,741 1135,745 1134,751 1144,756 1152,764 1158,772 1165,777 1174,784 1178.5,789.8" fill="none" stroke="#7a0a8a" stroke-width="1" stroke-linejoin="miter"/>
<polyline points="377.0,330.8 382.5,335.5 393.4,341.7 401.2,344.5 415.0,353.7 474.0,383.0 481.3,389.8 489.0,390.8 495.0,395.7 526.2,414.3 565.3,437.7 572.0,438.7 620.0,468.0 648.8,487.5 668.4,499.2 690.0,513.0 767.0,564.5 866.0,628.9 904.8,656.9 935.0,680.0 948.0,685.4 945.0,687.5 958.0,693.4 955.0,695.5 968.0,700.8 965.0,703.4 978.0,707.2 975.0,709.8 988.0,713.6 985.0,716.2 998.0,718.7 995.0,721.7 1008.0,723.7 1005.0,726.7 1018.0,729.6 1015.0,731.9 1028.0,737.1 1025.0,739.4 1038.0,744.6 1035.0,746.9 1048.0,751.4 1045.0,753.9 1058.0,758.3 1055.0,760.7 1068.0,765.4 1065.0,767.7 1078.0,772.7 1075.0,775.1 1088.0,779.1 1085.0,781.7 1098.0,785.4 1095.0,788.1 1108.0,791.1 1105.0,793.9 1118.0,796.9 1115.0,799.6 1128.0,803.4 1125.0,805.8 1138.0,810.4 1135.0,812.8 1148.0,816.5 1145.0,819.2 1158.0,822.1 1155.0,825.2 1168.0,825.7 1165.0,829.2 1178.0,829.0 1175.0,832.8 1188.0,830.7 1185.0,834.7 1198.0,832.3 1197.0,834.7 1209.3,836.4 1216.3,835.5" fill="none" stroke="#7a0a8a" stroke-width="1" stroke-linejoin="miter"/>
<polygon points="1229,142.5 1246,142.5 1248,145 1246,147.5 1229,147.5" fill="#0c6f0c"/>
<line x1="1208" y1="146.5" x2="1245" y2="146.5" stroke="#3a3060" stroke-width="1.2"/>
<polyline points="1226,153 1258,145.5" fill="none" stroke="#0c6f0c" stroke-width="2.5"/>
<polyline points="1194,161.5 1249,152.5" fill="none" stroke="#7a0a8a" stroke-width="1.8"/>
<polyline points="1208,144 1240,143" fill="none" stroke="#0c6f0c" stroke-width="1.5"/>
<polyline points="1180,825 1200,829 1222,826" fill="none" stroke="#0c6f0c" stroke-width="2"/>
<polyline points="1200,829.5 1222,830" fill="none" stroke="#0c6f0c" stroke-width="1.5"/>
<polyline points="1172,832 1196,836 1216,835.5" fill="none" stroke="#7a0a8a" stroke-width="2"/>
<line x1="754.5" y1="182" x2="754.5" y2="202" stroke="#2020c0" stroke-width="1"/>
<line x1="746" y1="192.5" x2="763" y2="192.5" stroke="#e0a040" stroke-width="1"/>
</svg>
<div class="lbl" style="left:320px;top:108px;width:37px">46.7</div>
<div class="lbl" style="left:320px;top:199px;width:43px">0</div>
<div class="lbl" style="left:320px;top:304px;width:43px">-50</div>
<div class="lbl" style="left:320px;top:409px;width:43px">-100</div>
<div class="lbl" style="left:320px;top:514px;width:43px">-150</div>
<div class="lbl" style="left:320px;top:618px;width:43px">-200</div>
<div class="lbl" style="left:320px;top:723px;width:43px">-250</div>
<div class="lbl" style="left:320px;top:828px;width:43px">-300</div>
<div class="lbl" style="left:300px;top:868px;width:41px">-318.9</div>
<div class="xl" style="left:347px;top:891px;width:60px">0.000</div>
<div class="xl" style="left:444px;top:881px;width:60px">0.25</div>
<div class="xl" style="left:542px;top:881px;width:60px">0.50</div>
<div class="xl" style="left:640px;top:881px;width:60px">0.75</div>
<div class="xl" style="left:738px;top:881px;width:60px">1.00</div>
<div class="xl" style="left:836px;top:881px;width:60px">1.25</div>
<div class="xl" style="left:934px;top:881px;width:60px">1.50</div>
<div class="xl" style="left:1032px;top:881px;width:60px">1.75</div>
<div class="xl" style="left:1130px;top:881px;width:60px">2.00</div>
<div class="xl" style="left:1228px;top:881px;width:60px">2.25</div>
<div class="t" style="left:1248px;top:891px">2.297</div>
<div class="t" style="left:783px;top:900px">Velocity (in/sec)</div>
<div class="t" style="left:286px;top:523px;transform:rotate(-90deg);transform-origin:0 0">Force (lbs)</div>

<div class="t" style="left:1106px;top:928px;color:#d01818;font-style:italic;font-size:10.4px;letter-spacing:0.1px">Rebound Close / Compression Open</div>
<div class="a" style="left:268px;top:943px;width:1012px;height:2px;background:#77766a"></div>

<!-- status panels -->
<div class="a" style="left:0;top:946px;width:1280px;height:26px;background:#ece9d8"></div>
<div class="sb" style="left:2px;width:48px">700</div>
<div class="sb" style="left:52px;width:66px">5.76 lbs</div>
<div class="sb" style="left:120px;width:99px">0.96 in/sec</div>
<div class="sb" style="left:221px;width:66px">-0.90 in</div>
<div class="sb" style="left:289px;width:66px">76.29 F</div>
<div class="sb" style="left:357px;width:699px;text-align:left;padding-left:4px;letter-spacing:0.15px">C:\Documents and Settings\fsae\Desktop\Sam's stuff\TOBZ1086 tokico 5 way setting on 5 (F1).CVP</div>
<div class="sb" style="left:1058px;width:100px;text-align:left;padding-left:5px">0.96 in/sec</div>
<div class="sb" style="left:1160px;width:99px;text-align:left;padding-left:4px">5.76 lbs</div>

<!-- ready bar -->
<div class="a" style="left:0;top:972px;width:1280px;height:22px;background:#ece9d8;border-top:1px solid #fff"></div>
<div class="a" style="left:0;top:975px;width:1073px;height:16px;border-top:1px solid #d8d5c5"></div>
<div class="t" style="left:3px;top:978px">Ready</div>
<div class="a" style="left:1074px;top:975px;width:36px;height:17px;border-top:1px solid #fff;border-left:1px solid #fff;border-right:1px solid #aca899;border-bottom:1px solid #aca899;text-align:center;line-height:15px">Motor</div>
<div class="a" style="left:1112px;top:975px;width:52px;height:17px;border-top:1px solid #fff;border-left:1px solid #fff;border-right:1px solid #aca899;border-bottom:1px solid #aca899;text-align:center;line-height:15px">Datacard</div>
<div class="a" style="left:1166px;top:975px;width:54px;height:17px;border-top:1px solid #d0cdbd;border-left:1px solid #d0cdbd;text-align:center;line-height:15px">12:13 AM</div>
<div class="a" style="left:1222px;top:975px;width:56px;height:17px;border-top:1px solid #d0cdbd;border-left:1px solid #d0cdbd;text-align:center;line-height:15px">5/20/2010</div>

<!-- taskbar -->
<div class="a" style="left:0;top:994px;width:1280px;height:30px;background:linear-gradient(#3a80f0 0px,#2a6cf0 2px,#245ee0 5px,#2458d8 20px,#1a4cc8 28px,#1a46b8 30px)"></div>
<div class="a" style="left:0;top:994px;width:97px;height:30px;border-radius:0 9px 9px 0;background:linear-gradient(#3a8a3a 0px,#88cc88 2px,#4caf4c 5px,#34a034 12px,#32a032 22px,#2a902a 28px,#1e6a1e 30px)"></div>
<div class="t" style="left:33px;top:1000px;color:#fff;font-weight:bold;font-style:italic;font-size:18px;text-shadow:1px 1px 1px #1a4a1a">start</div>
<div class="a" style="left:11px;top:1001px;width:8px;height:7px;background:#f05020;border-radius:2px 0 0 0"></div>
<div class="a" style="left:20px;top:1001px;width:8px;height:7px;background:#40c030;border-radius:0 2px 0 0"></div>
<div class="a" style="left:11px;top:1009px;width:8px;height:7px;background:#3070f0;border-radius:0 0 0 2px"></div>
<div class="a" style="left:20px;top:1009px;width:8px;height:7px;background:#f8c020;border-radius:0 0 2px 0"></div>
<div class="tbtn" style="left:198px;width:160px;background:#1e48b4;box-shadow:inset 1px 1px 2px #0a2a80"></div>
<div class="t" style="left:228px;top:1004px;color:#fff">Roehrig Shock 6.3 - [...</div>
<div class="tbtn" style="left:359px;width:157px;background:linear-gradient(#3c80f8,#3270e8 40%,#2a64dc)"></div>
<div class="t" style="left:388px;top:1004px;color:#fff">RX7Club.com - Searc...</div>
<div class="tbtn" style="left:518px;width:158px;background:linear-gradient(#3c80f8,#3270e8 40%,#2a64dc)"></div>
<div class="t" style="left:547px;top:1004px;color:#fff">Front 4 on 4 - Paint</div>
<div class="tbtn" style="left:679px;width:157px;background:linear-gradient(#3c80f8,#3270e8 40%,#2a64dc)"></div>
<div class="t" style="left:707px;top:1004px;color:#fff">Sam's stuff</div>
<!-- tray -->
<div class="a" style="left:1187px;top:994px;width:93px;height:30px;background:linear-gradient(#24a8f0 0px,#1890e8 4px,#1086e0 24px,#0e78d0 30px);border-left:1px solid #1050a0"></div>
<div class="t" style="left:1220px;top:1003px;color:#fff">12:13 AM</div>
<svg class="a" style="left:0;top:994px" width="1280" height="30">
<!-- quick launch IE -->
<g transform="translate(109,7)"><circle cx="8" cy="9" r="5.5" fill="#1e90e8"/><circle cx="8" cy="9" r="2.5" fill="#aee0ff"/><rect x="5" y="8.5" width="6" height="1.5" fill="#1060c0"/><path d="M1 15Q0 8 9 3Q15 0 15 2" fill="none" stroke="#e8c040" stroke-width="1.6"/></g>
<!-- firefox -->
<g transform="translate(132,7)"><circle cx="8" cy="8.5" r="7.5" fill="#e87018"/><circle cx="8.5" cy="8" r="4.5" fill="#2a60c8"/><path d="M2 5Q6 1 10 3Q7 5 9 8Q6 10 3 9Z" fill="#f0a030"/></g>
<!-- third -->
<g transform="translate(155,7)"><rect x="1" y="1" width="14" height="16" fill="#8090a8"/><rect x="2" y="2" width="12" height="14" fill="#c8d0e0"/><path d="M3 6L13 3M3 9L13 6M5 12H12M5 14H12" stroke="#506078" stroke-width="1.2"/></g>
<!-- chevron -->
<path d="M182 7L185 10L182 13M186 7L189 10L186 13" stroke="#b8d0f8" stroke-width="1.3" fill="none"/>
<!-- active button icon -->
<g transform="translate(208,8)"><rect x="0" y="0" width="16" height="15" fill="#1a2050"/><rect x="1" y="1" width="14" height="13" fill="#303a90"/><path d="M3 13V3H8Q11 3 11 6Q11 9 8 9H4L10 13" fill="none" stroke="#d02040" stroke-width="1.5"/><rect x="12" y="4" width="2" height="7" fill="#e0e0b0"/></g>
<!-- RX7 IE -->
<g transform="translate(368,6)"><circle cx="9" cy="10" r="5.5" fill="#1e90e8"/><circle cx="9" cy="10" r="2.5" fill="#aee0ff"/><rect x="6" y="9.5" width="6" height="1.5" fill="#1060c0"/><path d="M1.5 17Q0 9 10 3.5Q15.5 1 15.5 3" fill="none" stroke="#e8c040" stroke-width="1.6"/></g>
<!-- paint -->
<g transform="translate(527,6)"><path d="M3 8H13L12 17H4Z" fill="#b09060"/><path d="M4 9H12L11.5 16H4.5Z" fill="#d0b080"/><path d="M5 8L4 1M8 8V0M11 8L13 2" stroke="#e04040" stroke-width="1.6"/><path d="M8 8V2" stroke="#40a040" stroke-width="1.6"/></g>
<!-- folder -->
<g transform="translate(688,7)"><path d="M1 3H6L7 5H15V15H1Z" fill="#c8a020"/><path d="M1 6H15V15H1Z" fill="#f8d868"/></g>
<!-- tray icons -->
<g transform="translate(1163,7)"><rect x="0" y="0" width="12" height="14" fill="#fff" stroke="#000"/><text x="2.5" y="11" font-family="Liberation Sans" font-size="11" font-weight="bold" fill="#000">?</text></g>
<circle cx="1187" cy="15" r="7.5" fill="#3a8ef0" stroke="#b8d8ff" stroke-width="1"/>
<path d="M1189 11L1185 15L1189 19" stroke="#fff" stroke-width="2" fill="none"/>
<g transform="translate(1197,6)"><rect x="0" y="1" width="15" height="15" fill="#e02020"/><path d="M3 14V4H8Q11 4 11 7Q11 9.5 8 9.5H4L10 14" fill="none" stroke="#fff" stroke-width="2"/><circle cx="12" cy="14" r="3.5" fill="#a0a0a0" stroke="#fff"/></g>
</svg>

</body></html>
